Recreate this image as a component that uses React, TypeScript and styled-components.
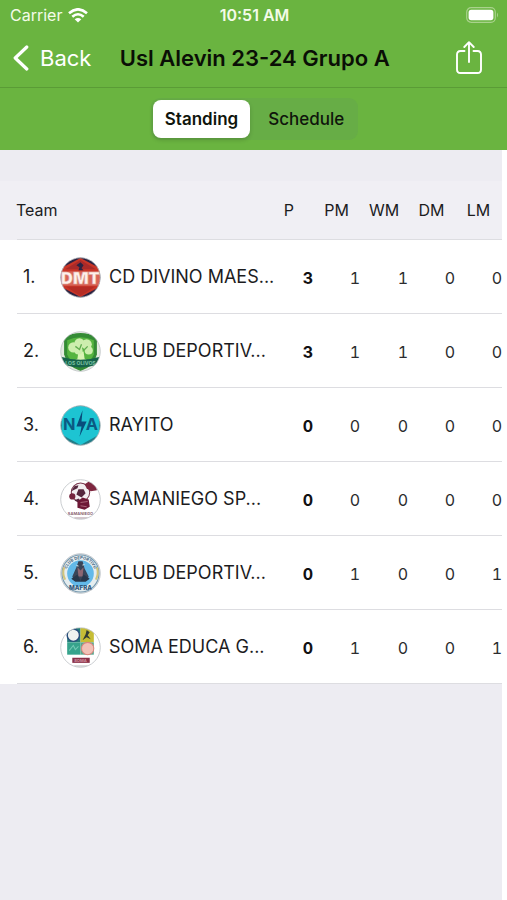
import React, { useState } from "react";
import styled, { createGlobalStyle } from "styled-components";

const GlobalStyle = createGlobalStyle`
  *, *::before, *::after { box-sizing: border-box; }
  body {
    margin: 0;
    background: #ffffff;
    color: #1c1c1e;
    font-family: Inter, "Liberation Sans", sans-serif;
  }
  button { font-family: inherit; border: 0; background: none; padding: 0; cursor: pointer; }
`;

const Screen = styled.div`
  min-height: 100vh;
  display: flex;
  flex-direction: column;
`;

const Top = styled.header`
  background: #6ab440;
`;

const StatusBar = styled.div`
  height: 30px;
  padding: 0 8px 0 10px;
  display: grid;
  grid-template-columns: 1fr auto 1fr;
  align-items: center;
  color: #f4fbe9;
  font-size: 16px;
  line-height: 20px;
`;

const Carrier = styled.div`
  display: flex;
  align-items: center;
  gap: 6px;
`;

const Clock = styled.time`
  font-weight: 600;
`;

const Battery = styled.div`
  justify-self: end;
  display: flex;
`;

const NavBar = styled.nav`
  height: 58px;
  padding: 0 24px 2px 13px;
  display: flex;
  align-items: center;
  border-bottom: 1px solid #5a9c36;
`;

const BackButton = styled.button`
  flex: none;
  display: flex;
  align-items: center;
  gap: 11px;
  color: #ffffff;
  font-size: 22px;
  line-height: 28px;
`;

const Title = styled.h1`
  flex: 1;
  margin: 0;
  padding-right: 37px;
  text-align: center;
  white-space: nowrap;
  color: #0a0f06;
  font-size: 22px;
  line-height: 28px;
  font-weight: 600;
`;

const ShareButton = styled.button`
  flex: none;
  display: flex;
`;

const TabBar = styled.div`
  height: 62px;
  padding: 0 0 0 2px;
  display: flex;
  justify-content: center;
  align-items: center;
`;

const Segments = styled.div`
  display: flex;
  padding: 2px;
  border-radius: 9px;
  background: #67ad46;
`;

const Segment = styled.button<{ $active: boolean }>`
  height: 38px;
  padding: 0 12px;
  border-radius: 8px;
  color: #0f150c;
  font-size: 17px;
  line-height: 22px;
  font-weight: ${(p) => (p.$active ? 600 : 500)};
  background: ${(p) => (p.$active ? "#ffffff" : "transparent")};
  box-shadow: ${(p) => (p.$active ? "0 2px 4px rgba(0, 0, 0, 0.16)" : "none")};

  & + & { padding: 0 12px 0 18px; }
`;

const Content = styled.main`
  flex: 1;
  margin-right: 5px;
  padding-top: 31px;
  background: #edecf2;
`;

const Table = styled.table`
  width: 100%;
  table-layout: fixed;
  border-collapse: collapse;
`;

const Row = styled.tr<{ $head?: boolean }>`
  height: ${(p) => (p.$head ? 59 : 74)}px;
  background: linear-gradient(#dddde1, #dddde1) 17px 100% / 100% 1px no-repeat
    ${(p) => (p.$head ? "#f0eff4" : "#ffffff")};
`;

const TeamHead = styled.th`
  padding: 0 0 2px 16px;
  text-align: left;
  font-size: 16px;
  font-weight: 400;
`;

const StatHead = styled.th<{ $first: boolean; $width: number }>`
  width: ${(p) => p.$width}px;
  padding: ${(p) => (p.$first ? "0 19px 2px 0" : "0 0 2px")};
  text-align: ${(p) => (p.$first ? "right" : "center")};
  font-size: 16px;
  font-weight: 400;
`;

const TeamCell = styled.th`
  padding: 0 0 0 23px;
  font-weight: 400;
`;

const TeamLine = styled.div`
  display: flex;
  align-items: center;
  font-size: 18px;
  line-height: 24px;
`;

const Rank = styled.span`
  flex: none;
  width: 37px;
  text-align: left;
`;

const TeamName = styled.span`
  padding-left: 8px;
  white-space: nowrap;
`;

const Stat = styled.td<{ $strong: boolean }>`
  padding: 1px 0 0;
  text-align: right;
  font-size: 16px;
  font-variant-numeric: tabular-nums;
  font-weight: ${(p) => (p.$strong ? 700 : 400)};
  color: ${(p) => (p.$strong ? "#111113" : "#2c2c2e")};
`;

const CrestSvg = styled.svg`
  flex: none;
  display: block;
  font-family: Inter, sans-serif;
`;

type CrestName = "dmt" | "olive" | "rayito" | "samaniego" | "mafra" | "soma";

const crestArt: Record<CrestName, React.ReactNode> = {
  dmt: (
    <>
      <rect width="40" height="40" fill="#2c2342" />
      <path d="M20 1 L39 11 V29 L20 39 L1 29 V11Z" fill="#c93527" />
      <path d="M20 3 L35 12 H5Z" fill="#a92a29" />
      <path d="M20 5l3 3-2 3 2 2h-5l1-3-3-2z" fill="#2c2342" />
      <path d="M6 29h28L20 38Z" fill="#b52c24" />
      <rect x="1" y="14" width="38" height="14" fill="#dd7468" opacity=".75" />
      <text x="20" y="26" textAnchor="middle" fontSize="16" fontWeight="900" fill="#fff0ea" stroke="#d9a49b" strokeWidth=".5">DMT</text>
    </>
  ),
  olive: (
    <>
      <rect width="40" height="40" fill="#e4ebe1" />
      <path d="M4 6Q20 -2 36 6L36 23Q33 35 20 39Q7 35 4 23Z" fill="#348b35" />
      <path d="M7 9Q20 3 33 9V23Q30 31 20 35Q10 31 7 23Z" fill="#55b440" />
      <path d="M18 20h5l1 7 4 2H13l4-2z" fill="#d9f3b5" />
      <g fill="#cdeeae">
        <circle cx="13" cy="16" r="5" /><circle cx="19" cy="12" r="5" />
        <circle cx="26" cy="13" r="5" /><circle cx="28" cy="19" r="4" /><circle cx="18" cy="19" r="4" />
      </g>
      <path d="M15 15l4 3 2-5M23 19l4-4" stroke="#62ad50" strokeWidth="1.3" fill="none" />
      <path d="M1 25Q20 31 39 25L36 33Q20 38 4 33Z" fill="#16624a" />
      <text x="20" y="33" textAnchor="middle" fontSize="5" fontWeight="700" fill="#7cc2a4">LOS OLIVOS</text>
    </>
  ),
  rayito: (
    <>
      <rect width="40" height="40" fill="#237d88" />
      <path d="M20 1Q36 2 38 13V29L20 39L2 29V13Q4 2 20 1Z" fill="#1dc4d2" />
      <text x="9" y="24" textAnchor="middle" fontSize="16" fontWeight="700" fill="#0b5a83">N</text>
      <text x="31" y="24" textAnchor="middle" fontSize="16" fontWeight="700" fill="#0b5a83">A</text>
      <path d="M22 5l-6 16h5l-2 10 7-15h-5z" fill="#084d7c" />
    </>
  ),
  samaniego: (
    <>
      <rect width="40" height="40" fill="#ffffff" />
      <circle cx="20" cy="13" r="9" fill="#f2edf0" stroke="#79384e" strokeWidth="1" />
      <path d="M18 10l5 0 2 4-4 4-5-3zM11 12l3-5 4-1-1 3zM14 21l4-2 3 3-3 1z" fill="#55273e" />
      <path d="M24 5l5-3 6 4 1 5-6 1-4-3z" fill="#7e263f" />
      <circle cx="12" cy="17" r="3" fill="#75243e" />
      <path d="M17 22l5-4 6 2 1 7-5 3-7-2z" fill="#6e1836" />
      <path d="M20 23l7-1M20 26l6 1" stroke="#aa6479" />
      <text x="20" y="35" textAnchor="middle" fontSize="4" fontWeight="600" fill="#805365">SAMANIEGO</text>
      <path d="M14 38h13" stroke="#ad929b" />
    </>
  ),
  mafra: (
    <>
      <rect width="40" height="40" fill="#d3e0e8" />
      <circle cx="20" cy="20" r="18" fill="#e5edef" stroke="#7397ae" />
      <circle cx="20" cy="20" r="13" fill="#62b9e9" />
      <path d="M4 14q-2 6 1 12M36 14q2 6-1 12" stroke="#d2c57b" strokeWidth="2" fill="none" />
      <path d="M18 8h4l2 7 4 8-2 4H14l-2-4 4-9z" fill="#3a4558" />
      <path d="M17 14l3 3 3-3-1 9h-4z" fill="#8c6672" />
      <path d="M11 25l6-4 3 6 3-6 6 4-4 3H15z" fill="#27374b" />
      <path d="M16 12l2 1M22 12l2-1" stroke="#c9dbe3" />
      <path id="mafra-arc" d="M6 20A14 14 0 0 1 34 20" fill="none" />
      <text fontSize="4" fontWeight="700" fill="#456783"><textPath href="#mafra-arc" startOffset="50%" textAnchor="middle">CLUB DEPORTIVO</textPath></text>
      <text x="20" y="36" textAnchor="middle" fontSize="6" fontWeight="800" fill="#31587b">MAFRA</text>
    </>
  ),
  soma: (
    <>
      <rect width="40" height="40" fill="#ffffff" />
      <rect x="7" y="1" width="13" height="14" fill="#237d78" />
      <circle cx="13" cy="8" r="6" fill="#eef2ef" stroke="#284d7c" strokeWidth="1.4" />
      <rect x="20" y="1" width="13" height="14" fill="#c6bd35" />
      <path d="M26 3l3 2-2 3 3 4-4-2-4 3 3-6z" fill="#343d34" />
      <rect x="7" y="15" width="13" height="12" fill="#36a38c" />
      <path d="M9 23l4-5 2 4 3-3" stroke="#73c9b5" fill="none" />
      <rect x="20" y="15" width="13" height="12" fill="#58a78f" />
      <circle cx="27" cy="21" r="6" fill="#f2c1b7" stroke="#dc867e" />
      <rect x="12" y="30" width="17" height="5" fill="#8a3048" />
      <text x="20" y="34" textAnchor="middle" fontSize="4" fontWeight="700" fill="#d394a4">SOMA</text>
      <path d="M14 38h13" stroke="#b9b9bc" />
    </>
  ),
};

function Crest({ name }: { name: CrestName }) {
  return (
    <CrestSvg width="41" height="41" viewBox="0 0 40 40" aria-hidden="true">
      <defs>
        <clipPath id={`crest-${name}`}><circle cx="20" cy="20" r="19.4" /></clipPath>
      </defs>
      <g clipPath={`url(#crest-${name})`}>{crestArt[name]}</g>
      <circle cx="20" cy="20" r="19.3" fill="none" stroke="#bfc3c7" strokeWidth=".8" />
    </CrestSvg>
  );
}

const columns = [
  { label: "P", width: 36 },
  { label: "PM", width: 47 },
  { label: "WM", width: 48 },
  { label: "DM", width: 47 },
  { label: "LM", width: 47 },
];

const teams: { name: string; crest: CrestName; stats: number[] }[] = [
  { name: "CD DIVINO MAES...", crest: "dmt", stats: [3, 1, 1, 0, 0] },
  { name: "CLUB DEPORTIV...", crest: "olive", stats: [3, 1, 1, 0, 0] },
  { name: "RAYITO", crest: "rayito", stats: [0, 0, 0, 0, 0] },
  { name: "SAMANIEGO SP...", crest: "samaniego", stats: [0, 0, 0, 0, 0] },
  { name: "CLUB DEPORTIV...", crest: "mafra", stats: [0, 1, 0, 0, 1] },
  { name: "SOMA EDUCA G...", crest: "soma", stats: [0, 1, 0, 0, 1] },
];

const tabs = ["Standing", "Schedule"];

export default function App() {
  const [tab, setTab] = useState("Standing");
  return (
    <>
      <GlobalStyle />
      <Screen>
        <Top>
          <StatusBar>
            <Carrier>
              Carrier
              <svg width="20" height="15" viewBox="0 0 20 15" aria-hidden="true">
                <g fill="none" stroke="#ffffff" strokeWidth="2.6">
                  <path d="M1 5.2Q10 -2.6 19 5.2" />
                  <path d="M4.3 8.8Q10 3.7 15.7 8.8" />
                </g>
                <path d="M10 14.6L6.7 11.3Q10 8.6 13.3 11.3Z" fill="#ffffff" />
              </svg>
            </Carrier>
            <Clock>10:51 AM</Clock>
            <Battery>
              <svg width="33" height="16" viewBox="0 0 33 16" role="img" aria-label="Battery full">
                <rect x=".7" y=".7" width="28.6" height="14.6" rx="4.5" fill="none" stroke="#a9d28c" strokeWidth="1.2" />
                <rect x="2.6" y="2.8" width="24.8" height="10.4" rx="2.6" fill="#ffffff" />
                <path d="M31 5.5Q33 8 31 10.5Z" fill="#a9d28c" />
              </svg>
            </Battery>
          </StatusBar>
          <NavBar>
            <BackButton type="button">
              <svg width="16" height="26" viewBox="0 0 16 26" aria-hidden="true">
                <path d="M13.8 2L2.2 13L13.8 24" fill="none" stroke="#ffffff" strokeWidth="3.2" strokeLinecap="round" strokeLinejoin="round" />
              </svg>
              Back
            </BackButton>
            <Title>Usl Alevin 23-24 Grupo A</Title>
            <ShareButton type="button" aria-label="Share">
              <svg width="28" height="34" viewBox="0 0 28 34" aria-hidden="true">
                <g fill="none" stroke="#ffffff" strokeWidth="1.9" strokeLinecap="round" strokeLinejoin="round">
                  <path d="M9.5 10H5.5Q2 10 2 13.5V28.5Q2 32 5.5 32H22.5Q26 32 26 28.5V13.5Q26 10 22.5 10H18.5" />
                  <path d="M14 21V1.4M9.3 6L14 1.2L18.7 6" />
                </g>
              </svg>
            </ShareButton>
          </NavBar>
          <TabBar>
            <Segments role="tablist">
              {tabs.map((t) => (
                <Segment key={t} type="button" role="tab" aria-selected={t === tab} $active={t === tab} onClick={() => setTab(t)}>
                  {t}
                </Segment>
              ))}
            </Segments>
          </TabBar>
        </Top>
        <Content>
          <Table>
            <thead>
              <Row $head>
                <TeamHead scope="col">Team</TeamHead>
                {columns.map((c, i) => (
                  <StatHead key={c.label} scope="col" $first={i === 0} $width={c.width}>{c.label}</StatHead>
                ))}
              </Row>
            </thead>
            <tbody>
              {teams.map((team, i) => (
                <Row key={team.crest}>
                  <TeamCell scope="row">
                    <TeamLine>
                      <Rank>{i + 1}.</Rank>
                      <Crest name={team.crest} />
                      <TeamName>{team.name}</TeamName>
                    </TeamLine>
                  </TeamCell>
                  {team.stats.map((value, j) => (
                    <Stat key={columns[j].label} $strong={j === 0}>{value}</Stat>
                  ))}
                </Row>
              ))}
            </tbody>
          </Table>
        </Content>
      </Screen>
    </>
  );
}
